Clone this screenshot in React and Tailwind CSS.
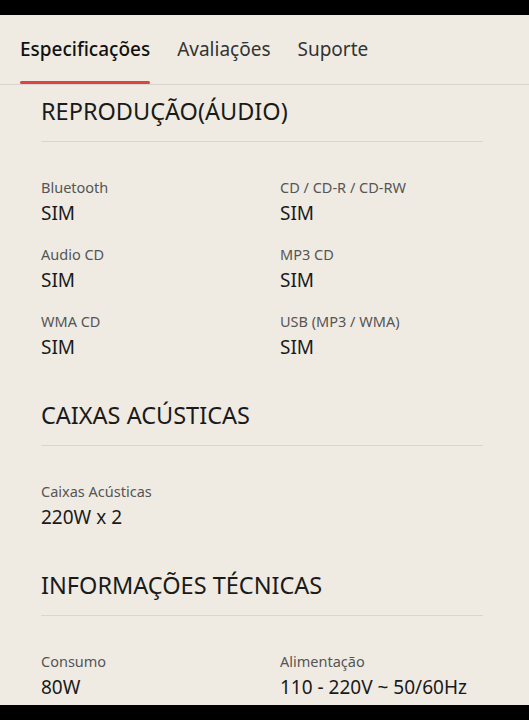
import React from "react";

const sections = [
  {
    title: "REPRODUÇÃO(ÁUDIO)",
    items: [
      ["Bluetooth", "SIM"],
      ["CD / CD-R / CD-RW", "SIM"],
      ["Audio CD", "SIM"],
      ["MP3 CD", "SIM"],
      ["WMA CD", "SIM"],
      ["USB (MP3 / WMA)", "SIM"],
    ],
  },
  {
    title: "CAIXAS ACÚSTICAS",
    items: [["Caixas Acústicas", "220W x 2"]],
  },
  {
    title: "INFORMAÇÕES TÉCNICAS",
    items: [
      ["Consumo", "80W"],
      ["Alimentação", "110 - 220V ~ 50/60Hz"],
    ],
  },
];

function Tabs() {
  const tabs = ["Especificações", "Avaliações", "Suporte"];
  return (
    <div className="flex h-[70px] items-end gap-[27px] border-b border-[#d9d5ce] pl-[20px]">
      {tabs.map((t, i) => (
        <div key={t} className="flex flex-col">
          <span
            className={
              "text-[19px] leading-[24px] " +
              (i === 0 ? "font-medium text-[#111]" : "text-[#333]")
            }
          >
            {t}
          </span>
          <span
            className={
              "mt-[20px] h-[3px] rounded-full " +
              (i === 0 ? "bg-[#d9453f]" : "bg-transparent")
            }
          />
        </div>
      ))}
    </div>
  );
}

function Section({ title, items }) {
  return (
    <div className="pb-[40px]">
      <h2 className="border-b border-[#dad6cf] pb-[15px] text-[23.5px] leading-[30px] text-[#1a1a1a]">
        {title}
      </h2>
      <div className="grid grid-cols-[239px_1fr] gap-y-[18px] pt-[35px]">
        {items.map(([label, value]) => (
          <div key={label} className="flex flex-col">
            <span className="text-[14.5px] leading-[20px] text-[#555]">{label}</span>
            <span className="mt-[3px] text-[19px] leading-[26px] text-[#1a1a1a]">
              {value}
            </span>
          </div>
        ))}
      </div>
    </div>
  );
}

export default function App() {
  return (
    <div
      className="flex h-[720px] w-[529px] flex-col overflow-hidden bg-[#efebe3]"
      style={{ fontFamily: '"Noto Sans", "Open Sans", sans-serif' }}
    >
      <div className="h-[15px] shrink-0 bg-black" />
      <Tabs />
      <div className="flex-1 overflow-hidden pl-[41px] pr-[46px] pt-[11px]">
        {sections.map((s) => (
          <Section key={s.title} {...s} />
        ))}
      </div>
      <div className="h-[15px] shrink-0 bg-black" />
    </div>
  );
}
